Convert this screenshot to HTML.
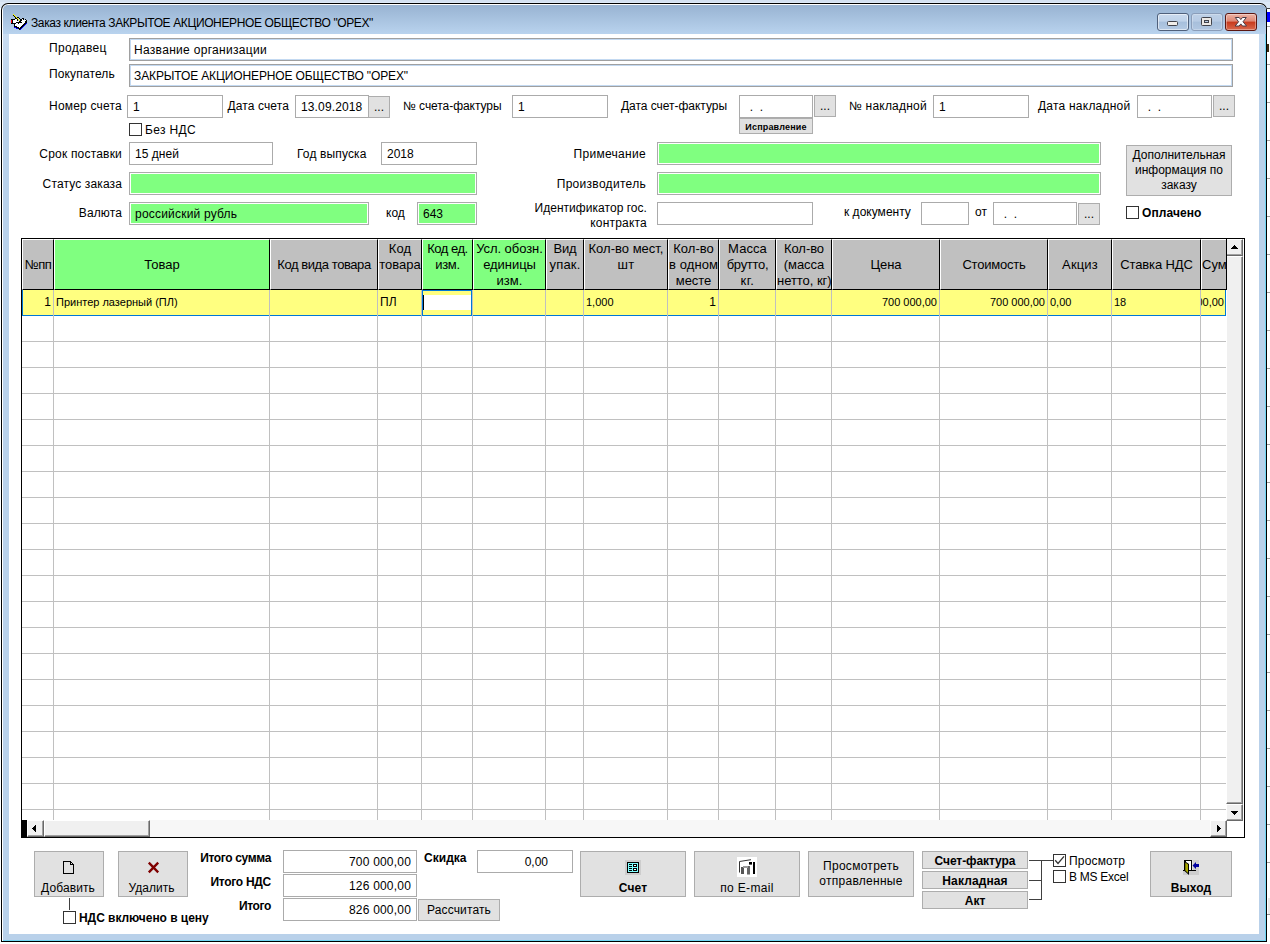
<!DOCTYPE html><html><head><meta charset="utf-8"><title>Заказ клиента</title><style>
*{margin:0;padding:0;box-sizing:border-box}
html,body{width:1270px;height:944px;overflow:hidden;background:#DCE8F6}
body{position:relative;font-family:"Liberation Sans",sans-serif;font-size:12px;color:#000}
div,span{position:absolute;white-space:nowrap}
.t{line-height:14px;height:14px;font-size:12px}
.t11{line-height:13px;height:13px;font-size:11px}
i{font-style:normal;display:inline-block;white-space:nowrap}
.b{font-weight:bold}
.r{text-align:right}
.c{text-align:center}
.f{background:#fff;border:1px solid #ABABAB}
.f2{background:#fff;border:1px solid #A0A0A0;box-shadow:inset 0 0 0 1px #C3D9F1}
.g{background:#80FF80;border:1px solid #ABABAB;box-shadow:inset 0 0 0 1px #fff}
.btn{background:#E1E1E1;border:1px solid #ADADAD}
.cb{width:13px;height:13px;background:#fff;border:1px solid #333}
.hc{background:#C0C0C0;border-left:1px solid #fff;border-top:1px solid #fff;border-right:1px solid #000;border-bottom:1px solid #000}
.hg{background:#80FF80}
.ht{line-height:15px;font-size:13px;text-align:center;left:0;right:0;white-space:nowrap}
</style></head><body>
<div style="left:0;top:0;width:1270px;height:2px;background:#D4E1F1"></div>
<div style="left:0;top:2px;width:1270px;height:1px;background:#DDE9F7"></div>
<div style="left:1267px;top:8px;width:3px;height:936px;background:#fff"></div>
<div style="left:1267px;top:26px;width:3px;height:1px;background:#A0A0A0"></div>
<div style="left:1267px;top:64px;width:3px;height:1px;background:#A0A0A0"></div>
<div style="left:1267px;top:102px;width:3px;height:1px;background:#A0A0A0"></div>
<div style="left:1267px;top:140px;width:3px;height:1px;background:#A0A0A0"></div>
<div style="left:1267px;top:178px;width:3px;height:1px;background:#A0A0A0"></div>
<div style="left:1267px;top:216px;width:3px;height:1px;background:#A0A0A0"></div>
<div style="left:1267px;top:254px;width:3px;height:1px;background:#A0A0A0"></div>
<div style="left:1267px;top:292px;width:3px;height:1px;background:#A0A0A0"></div>
<div style="left:1267px;top:330px;width:3px;height:1px;background:#A0A0A0"></div>
<div style="left:1267px;top:368px;width:3px;height:1px;background:#A0A0A0"></div>
<div style="left:1267px;top:406px;width:3px;height:1px;background:#A0A0A0"></div>
<div style="left:1267px;top:444px;width:3px;height:1px;background:#A0A0A0"></div>
<div style="left:1267px;top:482px;width:3px;height:1px;background:#A0A0A0"></div>
<div style="left:1267px;top:520px;width:3px;height:1px;background:#A0A0A0"></div>
<div style="left:1267px;top:558px;width:3px;height:1px;background:#A0A0A0"></div>
<div style="left:1267px;top:596px;width:3px;height:1px;background:#A0A0A0"></div>
<div style="left:1267px;top:634px;width:3px;height:1px;background:#A0A0A0"></div>
<div style="left:1267px;top:672px;width:3px;height:1px;background:#A0A0A0"></div>
<div style="left:1267px;top:710px;width:3px;height:1px;background:#A0A0A0"></div>
<div style="left:1267px;top:748px;width:3px;height:1px;background:#A0A0A0"></div>
<div style="left:1267px;top:786px;width:3px;height:1px;background:#A0A0A0"></div>
<div style="left:1267px;top:824px;width:3px;height:1px;background:#A0A0A0"></div>
<div style="left:1267px;top:862px;width:3px;height:1px;background:#A0A0A0"></div>
<div style="left:1267px;top:8px;width:3px;height:1px;background:#404040"></div>
<div style="left:1267px;top:12px;width:3px;height:10px;background:#0000FF"></div>
<div style="left:1267px;top:44px;width:2px;height:8px;background:#3A2A10"></div>
<div style="left:1268px;top:898px;width:2px;height:16px;background:#E8E8E8"></div>
<div style="left:1267px;top:914px;width:3px;height:1px;background:#909090"></div>
<div style="left:0;top:8px;width:1px;height:936px;background:#fff"></div>
<div style="left:0;top:942px;width:1270px;height:2px;background:#fff"></div>
<div style="left:1px;top:3px;width:1266px;height:939px;background:#000;border-radius:7px 7px 0 0"></div>
<div style="left:2px;top:4px;width:1264px;height:937px;background:#fff;border-radius:6px 6px 0 0"></div>
<div style="left:3px;top:5px;width:1263px;height:936px;background:#B9D1EA;border-radius:5px 5px 0 0"></div>
<div style="left:3px;top:5px;width:1263px;height:29px;background:linear-gradient(#98B3D2,#B9D3EE);border-radius:5px 5px 0 0"></div>
<div style="left:1265px;top:34px;width:1px;height:907px;background:#6FD6F3"></div>
<div style="left:3px;top:940px;width:1263px;height:1px;background:#6FD6F3"></div>
<div style="left:3px;top:34px;width:6px;height:90px;background:linear-gradient(#C9DCF1,#B9D1EA)"></div>
<div style="left:1259px;top:34px;width:6px;height:90px;background:linear-gradient(#C9DCF1,#B9D1EA)"></div>
<div style="left:9px;top:34px;width:1250px;height:900px;background:#fff"></div>
<div id="title" class="t" style="left:31px;top:16px;font-size:12px"><i id="x1" style="letter-spacing:-0.379px">Заказ клиента ЗАКРЫТОЕ АКЦИОНЕРНОЕ ОБЩЕСТВО "ОРЕХ"</i></div>
<div class="t" style="top:41px;left:49px;"><i id="x2" style="letter-spacing:0.316px">Продавец</i></div>
<div class="t" style="top:67px;left:49px;"><i id="x3" style="letter-spacing:0.142px">Покупатель</i></div>
<div class="f2" style="left:129px;top:38px;width:1104px;height:23px;">
<span class="t" style="left:4px;top:4px"><i id="x4" style="letter-spacing:0.305px">Название организации</i></span>
</div>
<div class="f2" style="left:129px;top:64px;width:1104px;height:23px;">
<span class="t" style="left:4px;top:4px"><i id="x5" style="letter-spacing:-0.122px">ЗАКРЫТОЕ АКЦИОНЕРНОЕ ОБЩЕСТВО "ОРЕХ"</i></span>
</div>
<div class="t" style="top:99px;right:1148px;text-align:right;"><i id="x6" style="letter-spacing:0.209px">Номер счета</i></div>
<div class="f" style="left:127px;top:95px;width:96px;height:23px;">
<span class="t" style="left:5px;top:4px">1</span>
</div>
<div class="t" style="top:99px;right:981px;text-align:right;"><i id="x7" style="letter-spacing:0.116px">Дата счета</i></div>
<div class="f" style="left:295px;top:95px;width:74px;height:23px;">
<span class="t" style="left:5px;top:4px"><i id="x8" style="letter-spacing:0.134px">13.09.2018</i></span>
</div>
<div class="btn" style="left:368px;top:96px;width:22px;height:22px"><span class="t" style="left:0;right:0;text-align:center;top:3px">...</span></div>
<div class="t" style="top:99px;left:403px;"><i id="x9" style="letter-spacing:-0.057px">№ счета-фактуры</i></div>
<div class="f" style="left:512px;top:95px;width:96px;height:23px;">
<span class="t" style="left:5px;top:4px">1</span>
</div>
<div class="t" style="top:99px;left:621px;"><i id="x10" style="letter-spacing:-0.031px">Дата счет-фактуры</i></div>
<div class="f" style="left:739px;top:95px;width:74px;height:23px;">
<span class="t" style="left:3px;top:4px">&nbsp;&nbsp;.&nbsp;&nbsp;.</span>
</div>
<div class="btn" style="left:814px;top:95px;width:22px;height:22px"><span class="t" style="left:0;right:0;text-align:center;top:3px">...</span></div>
<div class="btn" style="left:739px;top:118px;width:74px;height:16px"><span class="b" style="left:0;right:0;text-align:center;top:3px;font-size:9px;line-height:11px"><i id="x11" style="letter-spacing:0.181px">Исправление</i></span></div>
<div class="t" style="top:99px;left:849px;"><i id="x12" style="letter-spacing:0.202px">№ накладной</i></div>
<div class="f" style="left:933px;top:95px;width:96px;height:23px;">
<span class="t" style="left:5px;top:4px">1</span>
</div>
<div class="t" style="top:99px;left:1038px;"><i id="x13" style="letter-spacing:0.223px">Дата накладной</i></div>
<div class="f" style="left:1137px;top:95px;width:75px;height:23px;">
<span class="t" style="left:3px;top:4px">&nbsp;&nbsp;.&nbsp;&nbsp;.</span>
</div>
<div class="btn" style="left:1213px;top:95px;width:22px;height:22px"><span class="t" style="left:0;right:0;text-align:center;top:3px">...</span></div>
<div class="cb" style="left:129px;top:123px"></div>
<div class="t" style="top:123px;left:145px;"><i id="x14" style="letter-spacing:0.358px">Без НДС</i></div>
<div class="t" style="top:147px;right:1148px;text-align:right;"><i id="x15" style="letter-spacing:0.197px">Срок поставки</i></div>
<div class="f" style="left:129px;top:142px;width:144px;height:23px;">
<span class="t" style="left:5px;top:4px"><i id="x16" style="letter-spacing:0.045px">15 дней</i></span>
</div>
<div class="t" style="top:147px;left:297px;"><i id="x17" style="letter-spacing:0.136px">Год выпуска</i></div>
<div class="f" style="left:381px;top:142px;width:96px;height:23px;">
<span class="t" style="left:5px;top:4px">2018</span>
</div>
<div class="t" style="top:147px;right:624px;text-align:right;"><i id="x18" style="letter-spacing:0.303px">Примечание</i></div>
<div class="g" style="left:657px;top:142px;width:444px;height:23px;">
</div>
<div class="t" style="top:177px;right:1148px;text-align:right;"><i id="x19" style="letter-spacing:0.133px">Статус заказа</i></div>
<div class="g" style="left:129px;top:172px;width:348px;height:23px;">
</div>
<div class="t" style="top:177px;right:624px;text-align:right;"><i id="x20" style="letter-spacing:0.297px">Производитель</i></div>
<div class="g" style="left:657px;top:172px;width:444px;height:23px;">
</div>
<div class="t" style="top:206px;right:1148px;text-align:right;"><i id="x21" style="letter-spacing:0.124px">Валюта</i></div>
<div class="g" style="left:129px;top:202px;width:240px;height:23px;">
<span class="t" style="left:5px;top:4px"><i id="x22" style="letter-spacing:0.205px">российский рубль</i></span>
</div>
<div class="t" style="top:206px;left:386px;">код</div>
<div class="g" style="left:417px;top:202px;width:60px;height:23px;">
<span class="t" style="left:5px;top:4px">643</span>
</div>
<div class="t" style="top:201px;right:623px;text-align:right;"><i id="x23" style="letter-spacing:0.039px">Идентификатор гос.</i></div>
<div class="t" style="top:216px;right:623px;text-align:right;"><i id="x24" style="letter-spacing:0.205px">контракта</i></div>
<div class="f" style="left:657px;top:202px;width:156px;height:23px;">
</div>
<div class="t" style="top:205px;left:844px;"><i id="x25" style="letter-spacing:0.018px">к документу</i></div>
<div class="f" style="left:921px;top:202px;width:48px;height:23px;">
</div>
<div class="t" style="top:205px;left:975px;">от</div>
<div class="f" style="left:993px;top:202px;width:84px;height:23px;">
<span class="t" style="left:3px;top:4px">&nbsp;&nbsp;.&nbsp;&nbsp;.</span>
</div>
<div class="btn" style="left:1078px;top:203px;width:22px;height:22px"><span class="t" style="left:0;right:0;text-align:center;top:3px">...</span></div>
<div class="btn" style="left:1126px;top:145px;width:106px;height:51px"><span class="t" style="left:0;right:0;text-align:center;top:2px;height:auto;line-height:15px;white-space:normal">Дополнительная информация по заказу</span></div>
<div class="cb" style="left:1126px;top:206px"></div>
<div class="t b" style="top:206px;left:1142px;"><i id="x26" style="letter-spacing:0.086px">Оплачено</i></div>
<div style="left:21px;top:238px;width:1224px;height:600px;background:#000"></div>
<div style="left:22px;top:239px;width:1222px;height:598px;background:#fff"></div>
<div style="left:22px;top:239px;width:1205px;height:51px;background:#000"></div>
<div class="hc" style="left:22px;top:239px;width:32px;height:51px;overflow:hidden">
<span class="ht" style="top:17px"><i id="x27" style="letter-spacing:-0.510px">№пп</i></span>
</div>
<div class="hc hg" style="left:54px;top:239px;width:216px;height:51px;overflow:hidden">
<span class="ht" style="top:17px"><i id="x28" style="letter-spacing:-0.018px">Товар</i></span>
</div>
<div class="hc" style="left:270px;top:239px;width:108px;height:51px;overflow:hidden">
<span class="ht" style="top:17px"><i id="x29" style="letter-spacing:-0.421px">Код вида товара</i></span>
</div>
<div class="hc" style="left:378px;top:239px;width:44px;height:51px;overflow:hidden">
<span class="ht" style="top:1px"><i id="x30" style="letter-spacing:0.097px">Код</i></span>
<span class="ht" style="top:17px"><i id="x31" style="letter-spacing:-0.017px">товара</i></span>
</div>
<div class="hc hg" style="left:422px;top:239px;width:51px;height:51px;overflow:hidden">
<span class="ht" style="top:1px"><i id="x32" style="letter-spacing:-0.480px">Код ед.</i></span>
<span class="ht" style="top:17px"><i id="x33" style="letter-spacing:-0.270px">изм.</i></span>
</div>
<div class="hc hg" style="left:473px;top:239px;width:73px;height:51px;overflow:hidden">
<span class="ht" style="top:1px"><i id="x34" style="letter-spacing:-0.065px">Усл. обозн.</i></span>
<span class="ht" style="top:17px"><i id="x35" style="letter-spacing:-0.047px">единицы</i></span>
<span class="ht" style="top:33px"><i id="x36" style="letter-spacing:0.055px">изм.</i></span>
</div>
<div class="hc" style="left:546px;top:239px;width:38px;height:51px;overflow:hidden">
<span class="ht" style="top:1px"><i id="x37" style="letter-spacing:-0.177px">Вид</i></span>
<span class="ht" style="top:17px"><i id="x38" style="letter-spacing:0.184px">упак.</i></span>
</div>
<div class="hc" style="left:584px;top:239px;width:84px;height:51px;overflow:hidden">
<span class="ht" style="top:1px"><i id="x39" style="letter-spacing:0.014px">Кол-во мест,</i></span>
<span class="ht" style="top:17px"><i id="x40" style="letter-spacing:0.205px">шт</i></span>
</div>
<div class="hc" style="left:668px;top:239px;width:51px;height:51px;overflow:hidden">
<span class="ht" style="top:1px"><i id="x41" style="letter-spacing:0.013px">Кол-во</i></span>
<span class="ht" style="top:17px"><i id="x42" style="letter-spacing:0.071px">в одном</i></span>
<span class="ht" style="top:33px"><i id="x43" style="letter-spacing:-0.044px">месте</i></span>
</div>
<div class="hc" style="left:719px;top:239px;width:57px;height:51px;overflow:hidden">
<span class="ht" style="top:1px"><i id="x44" style="letter-spacing:0.072px">Масса</i></span>
<span class="ht" style="top:17px"><i id="x45" style="letter-spacing:-0.292px">брутто,</i></span>
<span class="ht" style="top:33px"><i id="x46" style="letter-spacing:0.444px">кг.</i></span>
</div>
<div class="hc" style="left:776px;top:239px;width:56px;height:51px;overflow:hidden">
<span class="ht" style="top:1px"><i id="x47" style="letter-spacing:-0.054px">Кол-во</i></span>
<span class="ht" style="top:17px"><i id="x48" style="letter-spacing:-0.022px">(масса</i></span>
<span class="ht" style="top:33px"><i id="x49" style="letter-spacing:-0.035px">нетто, кг)</i></span>
</div>
<div class="hc" style="left:832px;top:239px;width:108px;height:51px;overflow:hidden">
<span class="ht" style="top:17px"><i id="x50" style="letter-spacing:-0.016px">Цена</i></span>
</div>
<div class="hc" style="left:940px;top:239px;width:108px;height:51px;overflow:hidden">
<span class="ht" style="top:17px"><i id="x51" style="letter-spacing:-0.210px">Стоимость</i></span>
</div>
<div class="hc" style="left:1048px;top:239px;width:64px;height:51px;overflow:hidden">
<span class="ht" style="top:17px"><i id="x52" style="letter-spacing:0.154px">Акциз</i></span>
</div>
<div class="hc" style="left:1112px;top:239px;width:89px;height:51px;overflow:hidden">
<span class="ht" style="top:17px"><i id="x53" style="letter-spacing:-0.103px">Ставка НДС</i></span>
</div>
<div class="hc" style="left:1201px;top:239px;width:26px;height:51px;overflow:hidden;border-right:none"><span class="ht" style="top:17px;text-align:left;left:0px">Сумма</span></div>
<div style="left:22px;top:290px;width:1204px;height:26px;background:#0078D7"></div>
<div style="left:23px;top:290px;width:1202px;height:25px;background:#FFFF80"></div>
<div style="left:22px;top:341px;width:1204px;height:1px;background:#C0C0C0"></div>
<div style="left:22px;top:367px;width:1204px;height:1px;background:#C0C0C0"></div>
<div style="left:22px;top:393px;width:1204px;height:1px;background:#C0C0C0"></div>
<div style="left:22px;top:419px;width:1204px;height:1px;background:#C0C0C0"></div>
<div style="left:22px;top:445px;width:1204px;height:1px;background:#C0C0C0"></div>
<div style="left:22px;top:471px;width:1204px;height:1px;background:#C0C0C0"></div>
<div style="left:22px;top:497px;width:1204px;height:1px;background:#C0C0C0"></div>
<div style="left:22px;top:523px;width:1204px;height:1px;background:#C0C0C0"></div>
<div style="left:22px;top:549px;width:1204px;height:1px;background:#C0C0C0"></div>
<div style="left:22px;top:575px;width:1204px;height:1px;background:#C0C0C0"></div>
<div style="left:22px;top:601px;width:1204px;height:1px;background:#C0C0C0"></div>
<div style="left:22px;top:627px;width:1204px;height:1px;background:#C0C0C0"></div>
<div style="left:22px;top:653px;width:1204px;height:1px;background:#C0C0C0"></div>
<div style="left:22px;top:679px;width:1204px;height:1px;background:#C0C0C0"></div>
<div style="left:22px;top:705px;width:1204px;height:1px;background:#C0C0C0"></div>
<div style="left:22px;top:731px;width:1204px;height:1px;background:#C0C0C0"></div>
<div style="left:22px;top:757px;width:1204px;height:1px;background:#C0C0C0"></div>
<div style="left:22px;top:783px;width:1204px;height:1px;background:#C0C0C0"></div>
<div style="left:22px;top:809px;width:1204px;height:1px;background:#C0C0C0"></div>
<div style="left:53px;top:290px;width:1px;height:530px;background:#C0C0C0"></div>
<div style="left:269px;top:290px;width:1px;height:530px;background:#C0C0C0"></div>
<div style="left:377px;top:290px;width:1px;height:530px;background:#C0C0C0"></div>
<div style="left:421px;top:290px;width:1px;height:530px;background:#C0C0C0"></div>
<div style="left:472px;top:290px;width:1px;height:530px;background:#C0C0C0"></div>
<div style="left:545px;top:290px;width:1px;height:530px;background:#C0C0C0"></div>
<div style="left:583px;top:290px;width:1px;height:530px;background:#C0C0C0"></div>
<div style="left:667px;top:290px;width:1px;height:530px;background:#C0C0C0"></div>
<div style="left:718px;top:290px;width:1px;height:530px;background:#C0C0C0"></div>
<div style="left:775px;top:290px;width:1px;height:530px;background:#C0C0C0"></div>
<div style="left:831px;top:290px;width:1px;height:530px;background:#C0C0C0"></div>
<div style="left:939px;top:290px;width:1px;height:530px;background:#C0C0C0"></div>
<div style="left:1047px;top:290px;width:1px;height:530px;background:#C0C0C0"></div>
<div style="left:1111px;top:290px;width:1px;height:530px;background:#C0C0C0"></div>
<div style="left:1200px;top:290px;width:1px;height:530px;background:#C0C0C0"></div>
<div style="left:422px;top:290px;width:50px;height:26px;border:1px solid #0078D7;background:#FFFF80"></div>
<div style="left:423px;top:295px;width:48px;height:15px;background:#fff"></div>
<div style="left:423px;top:295px;width:1px;height:15px;background:#000"></div>
<div class="t" style="top:295px;right:1219px;text-align:right;">1</div>
<div class="t11" style="top:296px;left:56px;">Принтер лазерный (ПЛ)</div>
<div class="t" style="top:295px;left:380px;">ПЛ</div>
<div class="t11" style="top:296px;left:586px;">1,000</div>
<div class="t" style="top:295px;right:554px;text-align:right;">1</div>
<div class="t11" style="top:296px;right:333px;text-align:right;">700 000,00</div>
<div class="t11" style="top:296px;right:225px;text-align:right;">700 000,00</div>
<div class="t11" style="top:296px;left:1050px;">0,00</div>
<div class="t11" style="top:296px;left:1114px;">18</div>
<div style="left:1201px;top:291px;width:25px;height:24px;overflow:hidden"><span class="t11" style="right:2px;top:5px">700 000,00</span></div>
<div style="left:1226px;top:239px;width:17px;height:17px;background:#F0F0F0;border-top:1px solid #fff;border-left:1px solid #fff;border-right:1px solid #696969;border-bottom:1px solid #696969;box-shadow:inset -1px -1px 0 #A0A0A0"><svg style="position:absolute;left:0;top:0" width="15" height="15" viewBox="0 0 15 15" shape-rendering="crispEdges"><rect x="7" y="5" width="1" height="1" fill="#000"/><rect x="6" y="6" width="3" height="1" fill="#000"/><rect x="5" y="7" width="5" height="1" fill="#000"/><rect x="4" y="8" width="7" height="1" fill="#000"/></svg></div>
<div style="left:1226px;top:256px;width:17px;height:548px;background:#F0F0F0;border-top:1px solid #fff;border-left:1px solid #fff;border-right:1px solid #696969;border-bottom:1px solid #696969;box-shadow:inset -1px -1px 0 #A0A0A0"></div>
<div style="left:1226px;top:804px;width:17px;height:17px;background:#F0F0F0;border-top:1px solid #fff;border-left:1px solid #fff;border-right:1px solid #696969;border-bottom:1px solid #696969;box-shadow:inset -1px -1px 0 #A0A0A0"><svg style="position:absolute;left:0;top:0" width="15" height="15" viewBox="0 0 15 15" shape-rendering="crispEdges"><rect x="4" y="6" width="7" height="1" fill="#000"/><rect x="5" y="7" width="5" height="1" fill="#000"/><rect x="6" y="8" width="3" height="1" fill="#000"/><rect x="7" y="9" width="1" height="1" fill="#000"/></svg></div>
<div style="left:1226px;top:239px;width:1px;height:51px;background:#000"></div>
<div style="left:22px;top:820px;width:1204px;height:17px;background:#F7F7F7"></div>
<div style="left:21px;top:820px;width:6px;height:17px;background:#000"></div>
<div style="left:27px;top:820px;width:17px;height:17px;background:#F0F0F0;border-top:1px solid #fff;border-left:1px solid #fff;border-right:1px solid #696969;border-bottom:1px solid #696969;box-shadow:inset -1px -1px 0 #A0A0A0"><svg style="position:absolute;left:0;top:0" width="15" height="15" viewBox="0 0 15 15" shape-rendering="crispEdges"><rect x="4" y="7" width="1" height="1" fill="#000"/><rect x="5" y="6" width="1" height="3" fill="#000"/><rect x="6" y="5" width="1" height="5" fill="#000"/><rect x="7" y="4" width="1" height="7" fill="#000"/></svg></div>
<div style="left:44px;top:820px;width:106px;height:17px;background:#F0F0F0;border-top:1px solid #fff;border-left:1px solid #fff;border-right:1px solid #696969;border-bottom:1px solid #696969;box-shadow:inset -1px -1px 0 #A0A0A0"></div>
<div style="left:1210px;top:820px;width:17px;height:17px;background:#F0F0F0;border-top:1px solid #fff;border-left:1px solid #fff;border-right:1px solid #696969;border-bottom:1px solid #696969;box-shadow:inset -1px -1px 0 #A0A0A0"><svg style="position:absolute;left:0;top:0" width="15" height="15" viewBox="0 0 15 15" shape-rendering="crispEdges"><rect x="6" y="4" width="1" height="7" fill="#000"/><rect x="7" y="5" width="1" height="5" fill="#000"/><rect x="8" y="6" width="1" height="3" fill="#000"/><rect x="9" y="7" width="1" height="1" fill="#000"/></svg></div>
<div style="left:1227px;top:821px;width:17px;height:16px;background:#fff"></div>
<div style="left:21px;top:837px;width:1224px;height:1px;background:#000"></div>
<div class="btn" style="left:34px;top:851px;width:70px;height:46px"><span class="t c" style="left:-2px;right:0;top:29px"><i id="x54" style="letter-spacing:0.107px">Добавить</i></span></div>
<div class="btn" style="left:118px;top:851px;width:70px;height:46px"><span class="t c" style="left:-3px;right:0;top:29px"><i id="x55" style="letter-spacing:-0.004px">Удалить</i></span></div>
<div style="left:69px;top:898px;width:1px;height:12px;background:#404040"></div>
<div class="cb" style="left:63px;top:911px"></div>
<div class="t b" style="top:911px;left:79px;"><i id="x56" style="letter-spacing:-0.042px">НДС включено в цену</i></div>
<div class="t b" style="top:851px;right:999px;text-align:right;"><i id="x57" style="letter-spacing:-0.349px">Итого сумма</i></div>
<div class="t b" style="top:875px;right:999px;text-align:right;"><i id="x58" style="letter-spacing:-0.285px">Итого НДС</i></div>
<div class="t b" style="top:899px;right:999px;text-align:right;"><i id="x59" style="letter-spacing:-0.369px">Итого</i></div>
<div class="f" style="left:283px;top:850px;width:134px;height:23px;">
<span class="t" style="right:5px;top:4px"><i id="x60" style="letter-spacing:0.194px">700 000,00</i></span>
</div>
<div class="f" style="left:283px;top:874px;width:134px;height:23px;">
<span class="t" style="right:5px;top:4px"><i id="x61" style="letter-spacing:0.194px">126 000,00</i></span>
</div>
<div class="f" style="left:283px;top:898px;width:134px;height:23px;">
<span class="t" style="right:5px;top:4px"><i id="x62" style="letter-spacing:0.194px">826 000,00</i></span>
</div>
<div class="t b" style="top:851px;left:424px;"><i id="x63" style="letter-spacing:0.040px">Скидка</i></div>
<div class="f" style="left:477px;top:850px;width:96px;height:23px;">
<span class="t" style="right:24px;top:4px">0,00</span>
</div>
<div class="btn" style="left:418px;top:899px;width:82px;height:22px"><span class="t c" style="left:0;right:0;top:3px"><i id="x64" style="letter-spacing:0.127px">Рассчитать</i></span></div>
<div class="btn" style="left:580px;top:851px;width:106px;height:46px"><span class="t b c" style="left:0;right:0;top:29px"><i id="x65" style="letter-spacing:0.106px">Счет</i></span></div>
<div class="btn" style="left:694px;top:851px;width:106px;height:46px"><span class="t c" style="left:0;right:0;top:29px"><i id="x66" style="letter-spacing:0.320px">по E-mail</i></span></div>
<div class="btn" style="left:808px;top:851px;width:106px;height:46px"><span class="t c" style="left:0;right:0;top:7px"><i id="x67" style="letter-spacing:0.279px">Просмотреть</i></span><span class="t c" style="left:0;right:0;top:22px"><i id="x68" style="letter-spacing:0.276px">отправленные</i></span></div>
<div class="btn" style="left:922px;top:851px;width:106px;height:18px"><span class="t b c" style="left:0;right:0;top:2px"><i id="x69" style="letter-spacing:-0.079px">Счет-фактура</i></span></div>
<div class="btn" style="left:922px;top:871px;width:106px;height:18px"><span class="t b c" style="left:0;right:0;top:2px"><i id="x70" style="letter-spacing:0.106px">Накладная</i></span></div>
<div class="btn" style="left:922px;top:891px;width:106px;height:18px"><span class="t b c" style="left:0;right:0;top:2px"><i id="x71" style="letter-spacing:-0.021px">Акт</i></span></div>
<div style="left:1029px;top:860px;width:24px;height:1px;background:#404040"></div>
<div style="left:1029px;top:880px;width:12px;height:1px;background:#404040"></div>
<div style="left:1029px;top:899px;width:12px;height:1px;background:#404040"></div>
<div style="left:1041px;top:860px;width:1px;height:40px;background:#404040"></div>
<div class="cb" style="left:1053px;top:854px"><svg style="position:absolute;left:0;top:0" width="11" height="11" viewBox="0 0 11 11"><path d="M1.2 5.3 L4 8.4 L10 1.3" fill="none" stroke="#333" stroke-width="1.3"/></svg></div>
<div class="cb" style="left:1053px;top:870px"></div>
<div class="t" style="top:854px;left:1069px;"><i id="x72" style="letter-spacing:0.173px">Просмотр</i></div>
<div class="t" style="top:870px;left:1069px;"><i id="x73" style="letter-spacing:-0.262px">В MS Excel</i></div>
<div class="btn" style="left:1150px;top:851px;width:82px;height:46px"><span class="t b c" style="left:0;right:0;top:29px"><i id="x74" style="letter-spacing:0.124px">Выход</i></span></div>
<svg style="position:absolute;left:11px;top:14px" width="16" height="16" viewBox="0 0 16 16" shape-rendering="crispEdges"><rect x="2" y="0" width="1" height="1" fill="#FFFF00"/><rect x="2" y="1" width="1" height="1" fill="#000"/><rect x="3" y="1" width="1" height="1" fill="#FFFF00"/><rect x="3" y="2" width="1" height="1" fill="#000"/><rect x="4" y="2" width="1" height="1" fill="#FFFF00"/><rect x="4" y="3" width="1" height="1" fill="#000"/><rect x="5" y="3" width="1" height="1" fill="#FFFF00"/><rect x="6" y="3" width="2" height="1" fill="#000"/><rect x="4" y="4" width="2" height="1" fill="#000"/><rect x="6" y="4" width="1" height="1" fill="#FFFF00"/><rect x="8" y="4" width="1" height="1" fill="#000"/><rect x="11" y="4" width="2" height="1" fill="#000"/><rect x="0" y="5" width="4" height="1" fill="#000"/><rect x="4" y="5" width="2" height="1" fill="#fff"/><rect x="6" y="5" width="1" height="1" fill="#000"/><rect x="7" y="5" width="1" height="1" fill="#FFFF00"/><rect x="9" y="5" width="2" height="1" fill="#000"/><rect x="11" y="5" width="1" height="1" fill="#fff"/><rect x="12" y="5" width="1" height="1" fill="#000"/><rect x="14" y="5" width="1" height="1" fill="#000"/><rect x="0" y="6" width="1" height="1" fill="#FF0000"/><rect x="1" y="6" width="1" height="1" fill="#000"/><rect x="2" y="6" width="4" height="1" fill="#fff"/><rect x="6" y="6" width="1" height="1" fill="#000"/><rect x="8" y="6" width="1" height="1" fill="#FFFF00"/><rect x="9" y="6" width="2" height="1" fill="#000"/><rect x="11" y="6" width="4" height="1" fill="#fff"/><rect x="15" y="6" width="1" height="1" fill="#000"/><rect x="0" y="7" width="1" height="1" fill="#FF0000"/><rect x="1" y="7" width="1" height="1" fill="#000"/><rect x="2" y="7" width="6" height="1" fill="#fff"/><rect x="8" y="7" width="2" height="1" fill="#000"/><rect x="10" y="7" width="4" height="1" fill="#fff"/><rect x="14" y="7" width="2" height="1" fill="#000"/><rect x="0" y="8" width="1" height="1" fill="#FF0000"/><rect x="1" y="8" width="1" height="1" fill="#000"/><rect x="2" y="8" width="3" height="1" fill="#fff"/><rect x="5" y="8" width="6" height="1" fill="#000"/><rect x="11" y="8" width="3" height="1" fill="#fff"/><rect x="14" y="8" width="2" height="1" fill="#000"/><rect x="0" y="9" width="5" height="1" fill="#000"/><rect x="5" y="9" width="2" height="1" fill="#fff"/><rect x="7" y="9" width="1" height="1" fill="#000"/><rect x="8" y="9" width="5" height="1" fill="#fff"/><rect x="13" y="9" width="2" height="1" fill="#000"/><rect x="15" y="9" width="1" height="1" fill="#0000FF"/><rect x="3" y="10" width="1" height="1" fill="#000"/><rect x="4" y="10" width="8" height="1" fill="#fff"/><rect x="12" y="10" width="2" height="1" fill="#000"/><rect x="14" y="10" width="1" height="1" fill="#0000FF"/><rect x="3" y="11" width="1" height="1" fill="#000"/><rect x="4" y="11" width="7" height="1" fill="#fff"/><rect x="11" y="11" width="2" height="1" fill="#000"/><rect x="13" y="11" width="1" height="1" fill="#0000FF"/><rect x="3" y="12" width="3" height="1" fill="#000"/><rect x="6" y="12" width="4" height="1" fill="#fff"/><rect x="10" y="12" width="2" height="1" fill="#000"/><rect x="12" y="12" width="1" height="1" fill="#0000FF"/><rect x="3" y="13" width="2" height="1" fill="#0000FF"/><rect x="5" y="13" width="3" height="1" fill="#000"/><rect x="8" y="13" width="1" height="1" fill="#fff"/><rect x="9" y="13" width="2" height="1" fill="#000"/><rect x="11" y="13" width="1" height="1" fill="#0000FF"/><rect x="5" y="14" width="2" height="1" fill="#0000FF"/><rect x="7" y="14" width="3" height="1" fill="#000"/><rect x="10" y="14" width="1" height="1" fill="#0000FF"/><rect x="8" y="15" width="1" height="1" fill="#000"/><rect x="9" y="15" width="1" height="1" fill="#0000FF"/></svg>
<div style="left:1157px;top:13px;width:32px;height:18px;border:1px solid #4F607B;border-radius:3px;background:linear-gradient(#C9DAEE 0,#BFD2E9 45%,#A6BFDC 50%,#B4CAE4 100%);box-shadow:inset 0 0 0 1px rgba(255,255,255,.55)"><svg style="position:absolute;left:0;top:0" width="30" height="16" viewBox="0 0 30 16"><rect x="9.5" y="7.5" width="10" height="4" rx="1" fill="#F1EEEA" stroke="#41434B" stroke-width="1"/></svg></div>
<div style="left:1191px;top:13px;width:32px;height:18px;border:1px solid #8A9DB9;border-radius:3px;background:linear-gradient(#BDD0E7 0,#B7CBE4 45%,#A7BFDB 50%,#B1C7E2 100%);box-shadow:inset 0 0 0 1px rgba(255,255,255,.25)"><svg style="position:absolute;left:0;top:0" width="30" height="16" viewBox="0 0 30 16"><rect x="9.5" y="3.5" width="10" height="8" rx="1" fill="#ECE9E6" stroke="#41434B" stroke-width="1"/><rect x="12.5" y="6.5" width="4" height="2" fill="#B9CCE4" stroke="#41434B" stroke-width="1"/></svg></div>
<div style="left:1225px;top:13px;width:32px;height:18px;border:1px solid #5A1611;border-radius:3px;background:linear-gradient(#EDB3A5 0,#DE8673 45%,#C7391C 50%,#D9694D 100%);box-shadow:inset 0 0 0 1px rgba(255,255,255,.35)"><svg style="position:absolute;left:0;top:0" width="30" height="16" viewBox="0 0 30 16"><path transform="translate(-0.7,0)" d="M10 3.5 L13.9 3.5 L15.5 5.6 L17.1 3.5 L21 3.5 L17.7 7.75 L21.2 12 L17.2 12 L15.5 9.9 L13.8 12 L9.8 12 L13.3 7.75 Z" fill="#fff" stroke="#4A3B44" stroke-width="1" stroke-linejoin="round"/></svg></div>
<svg style="position:absolute;left:62px;top:860px" width="13" height="15" viewBox="62 860 13 15" shape-rendering="crispEdges"><path d="M63.5 861.5 H70.5 L73.5 864.5 V873.5 H63.5 Z" fill="none" stroke="#000" stroke-width="1"/><path d="M70.5 861.5 V864.5 H73.5" fill="none" stroke="#000" stroke-width="1"/></svg>
<svg style="position:absolute;left:146px;top:860px" width="15" height="15" viewBox="146 860 15 15"><path d="M148.8 862.6 L158.2 872.4 M158.2 862.6 L148.8 872.4" stroke="#7F0000" stroke-width="2.3" fill="none"/></svg>
<svg style="position:absolute;left:625px;top:860px" width="16" height="15" viewBox="625 860 16 15" shape-rendering="crispEdges">
<rect x="625" y="860" width="16" height="15" fill="#CDCDCD"/>
<rect x="627" y="862" width="12" height="11" fill="#000"/>
<rect x="628" y="863" width="10" height="9" fill="#80FFFF"/>
<rect x="629" y="864" width="3" height="1" fill="#000"/><rect x="629" y="866" width="3" height="1" fill="#000"/>
<rect x="629" y="868" width="3" height="1" fill="#000"/><rect x="629" y="870" width="3" height="1" fill="#000"/>
<rect x="633" y="864" width="4" height="3" fill="#000"/><rect x="634" y="865" width="2" height="1" fill="#fff"/>
<rect x="633" y="868" width="4" height="3" fill="#000"/><rect x="634" y="869" width="2" height="1" fill="#fff"/>
</svg>
<svg style="position:absolute;left:737px;top:857px" width="20" height="20" viewBox="737 857 20 20">
<rect x="737" y="857" width="20" height="20" fill="#fff"/>
<path d="M739.5 872.5 V861.5 L751 859.7" fill="none" stroke="#333" stroke-width="1"/>
<rect x="749" y="862" width="3" height="2.6" fill="#000"/>
<rect x="753" y="862" width="2" height="12" fill="#000"/>
<rect x="741" y="867" width="3" height="7" fill="#555"/>
<rect x="747" y="866" width="3" height="8.5" fill="#666"/>
<rect x="743" y="866" width="5" height="2" fill="#999"/>
</svg>
<svg style="position:absolute;left:1182px;top:859px" width="18" height="17" viewBox="1182 859 18 17" shape-rendering="crispEdges">
<rect x="1193" y="860" width="6" height="15" fill="#CDCDCD"/>
<rect x="1183" y="871" width="16" height="4" fill="#CDCDCD"/>
<rect x="1184" y="860" width="8" height="11" fill="#000"/>
<rect x="1186" y="861" width="5" height="9" fill="#fff"/>
<rect x="1183" y="870" width="13" height="1" fill="#000"/>
<polygon points="1184.5,861 1189,864 1189,875 1184.5,871" fill="#000" shape-rendering="auto"/>
<polygon points="1185.3,862.6 1188,864.6 1188,873 1185.3,870.4" fill="#A8A800" shape-rendering="auto"/>
<polygon points="1192.5,865.5 1196,862 1196,864 1199,864 1199,867 1196,867 1196,869" fill="#0000A0" shape-rendering="auto"/>
</svg>
</body></html>
